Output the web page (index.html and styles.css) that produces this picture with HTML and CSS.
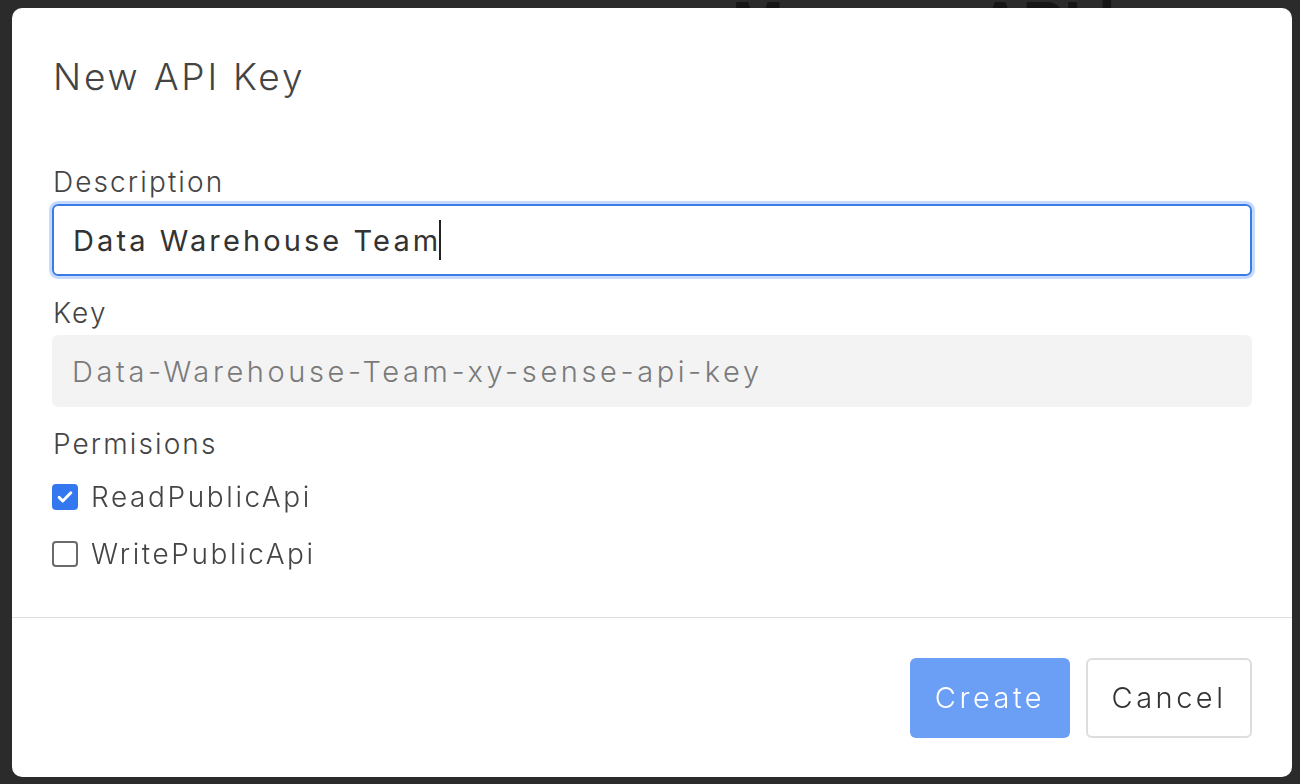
FILE: index.html
```html
<!DOCTYPE html>
<html lang="en">
<head>
  <meta charset="UTF-8">
  <meta name="viewport" content="width=device-width, initial-scale=1.0">
  <title>New API Key</title>
  <link rel="stylesheet" href="styles.css">
</head>
<body>

<!-- Page behind the dialog -->
<div class="page">
  <h1 class="page-title">Manage API keys</h1>
</div>

<div class="backdrop">
  <div class="modal">

    <div class="modal-body">
      <h2 class="modal-title">New API Key</h2>

      <div class="field">
        <label class="field-label">Description</label>
        <div class="field-input focused">
          <span>Data Warehouse Team</span><span class="caret"></span>
        </div>
      </div>

      <div class="field">
        <label class="field-label">Key</label>
        <div class="field-input readonly">Data-Warehouse-Team-xy-sense-api-key</div>
      </div>

      <div class="field">
        <label class="field-label">Permisions</label>
        <div class="checks">
          <div class="check-row">
            <span class="checkbox checked">
              <svg viewBox="0 0 16 16" width="20" height="20"><path d="M3.3 8.3l2.9 2.9 6.5-6.6" fill="none" stroke="#fff" stroke-width="2.3" stroke-linecap="round" stroke-linejoin="round"/></svg>
            </span>
            ReadPublicApi
          </div>
          <div class="check-row">
            <span class="checkbox"></span>
            WritePublicApi
          </div>
        </div>
      </div>
    </div>

    <div class="modal-footer">
      <button class="btn btn-primary">Create</button>
      <button class="btn btn-default">Cancel</button>
    </div>

  </div>
</div>

</body>
</html>
```

FILE: styles.css
```css
body {
  margin: 0;
  padding: 0;
  font-family: Inter, "Open Sans", sans-serif;
  background: #2b2b2b;
  overflow: hidden;
  height: 784px;
}
.page {
  padding-left: 732px;
}
.page-title {
  margin: 0;
  font-family: "Liberation Sans", Arial, sans-serif;
  font-size: 62px;
  font-weight: bold;
  line-height: 46px;
  height: 46px;
  color: #161616;
}
.backdrop {
  position: fixed;
  top: 0;
  left: 0;
  right: 0;
  bottom: 0;
  padding: 8px 8px 7px 12px;
  display: flex;
}
.modal {
  flex: 1;
  background: #ffffff;
  border-radius: 10px;
  display: flex;
  flex-direction: column;
}
.modal-body {
  padding: 40px 40px 0 40px;
  height: 610px;
  box-sizing: border-box;
  border-bottom: 1px solid #dcdcdc;
}
.modal-title {
  margin: 0 0 56px 1px;
  font-size: 37px;
  font-weight: 300;
  line-height: 57px;
  letter-spacing: 2.8px;
  color: #444;
}
.field {
  margin-bottom: 16px;
}
.field-label {
  display: block;
  margin-left: 1px;
  font-size: 28px;
  font-weight: 300;
  line-height: 43px;
  letter-spacing: 2.1px;
  color: #444;
}
.field-input {
  height: 72px;
  box-sizing: border-box;
  padding: 0 20px;
  display: flex;
  align-items: center;
  font-size: 29px;
  letter-spacing: 3.1px;
  color: #333;
  border-radius: 6px;
}
.field-input.focused {
  border: 2px solid #3b7be9;
  box-shadow: 0 0 0 3px #c6dafb;
  padding-left: 19px;
}
.caret {
  width: 2px;
  height: 40px;
  background: #222;
  margin-left: -2px;
}
.field-input.readonly {
  background: #f3f3f3;
  color: #7a7a7a;
  font-weight: 300;
  letter-spacing: 3.6px;
}
.checks {
  padding-top: 2px;
}
.check-row {
  display: flex;
  align-items: center;
  gap: 13px;
  height: 57px;
  font-size: 28px;
  font-weight: 300;
  letter-spacing: 2.6px;
  color: #444;
}
.checkbox {
  width: 26px;
  height: 26px;
  box-sizing: border-box;
  border: 2px solid #6a6a6a;
  border-radius: 4px;
  display: flex;
  align-items: center;
  justify-content: center;
}
.checkbox.checked {
  background: #3478f0;
  border-color: #3478f0;
}
.modal-footer {
  flex: 1;
  display: flex;
  justify-content: flex-end;
  align-items: center;
  gap: 16px;
  padding: 0 40px;
}
.btn {
  height: 80px;
  border-radius: 6px;
  font-family: Inter, "Open Sans", sans-serif;
  font-size: 29px;
  font-weight: 300;
  letter-spacing: 3.5px;
  cursor: pointer;
}
.btn-primary {
  width: 160px;
  background: #6b9ff6;
  border: none;
  color: #ffffff;
}
.btn-default {
  width: 166px;
  background: #ffffff;
  border: 2px solid #dddddd;
  color: #333;
}
```
